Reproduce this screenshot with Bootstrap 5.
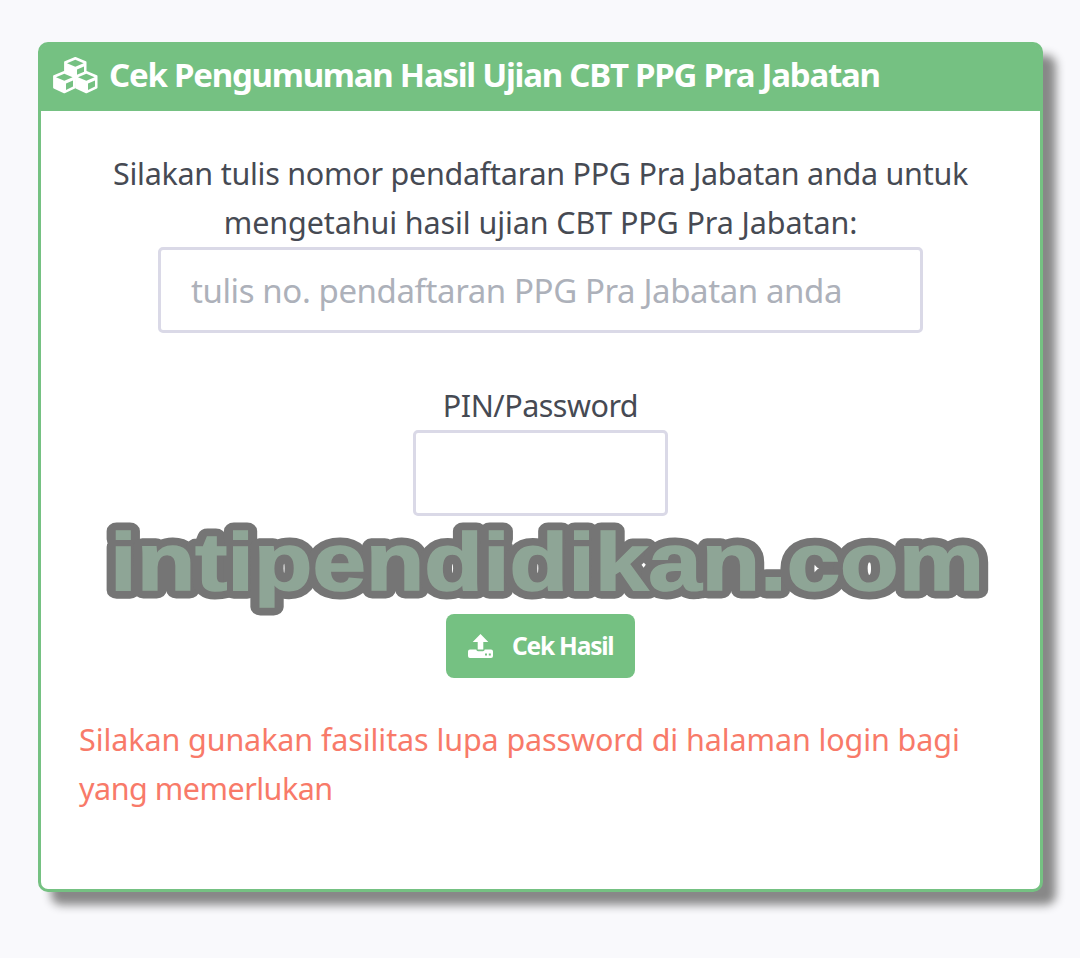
<!DOCTYPE html>
<html lang="id">
<head>
<meta charset="utf-8">
<meta name="viewport" content="width=device-width, initial-scale=1">
<title>Cek Pengumuman</title>
<link href="https://cdn.jsdelivr.net/npm/bootstrap@5.3.0/dist/css/bootstrap.min.css" rel="stylesheet">
<style>
body{background:#f9f9fc;font-family:"Noto Sans","Open Sans",sans-serif;color:#495057;padding:42px 37px 0 38px;height:958px;overflow:hidden}
.panel{height:850px;border:3px solid #75c182;border-radius:10px;box-shadow:13px 13px 10px #888;background:#fff}
.panel-title{height:66px;background:#75c182;border:0;border-radius:7px 7px 0 0;padding:0 0 7px 12px;color:#fff}
.panel-title h1{font-size:33px;font-weight:700;line-height:60px;margin:0 0 0 11px;letter-spacing:-1.24px}
.copy{font-size:30.5px;line-height:49px;color:#464a53;white-space:nowrap;letter-spacing:-.1px}
.intro{margin-top:38px}
.intro span{letter-spacing:-.26px}
.pin-label{margin-top:48px;letter-spacing:-.5px}
.field{height:86px;border:3px solid #dad9e7;border-radius:5px;font-size:33px;padding:0 30px;box-shadow:none;letter-spacing:-.4px}
.field::placeholder{color:#adb1ba;opacity:1}
.number{width:765px}
.pin{width:255px}
.send{width:189px;height:64px;margin-top:98px;background:#75c182;color:#fff;border:0;border-radius:8px;font-size:24.5px;font-weight:700;padding:0 0 0 22px;letter-spacing:-1.2px}
.send:hover{background:#62b671;color:#fff}
.send span{margin-left:19px}
.warn{color:#f87a69;margin:37px 0 0 38px}
.warn span{letter-spacing:-.5px}
.brand{left:100px;top:510px;pointer-events:none;font-family:"Liberation Sans",Arial,sans-serif;font-weight:700;font-size:81px}
</style>
</head>
<body>
<main class="panel card">
  <div class="panel-title card-header d-flex align-items-center">
    <svg width="45" height="38" viewBox="0 0 45 38" aria-hidden="true">
      <defs><g id="cube"><path fill="#fff" stroke="#fff" stroke-width="2" stroke-linejoin="round" d="M22.300 2 32.500 6.200V17.500L22.300 22.300 12.100 17.500V6.200Z"/><path fill="#75c182" d="m22.300 3.700 8.300 3.500-8.300 3.600L14 7.200ZM24 13.500l7-3.100v6.200l-7 3.400z"/></g></defs>
      <use href="#cube"/><use href="#cube" x="-11" y="14"/><use href="#cube" x="11" y="14"/>
    </svg>
    <h1>Cek Pengumuman Hasil Ujian CBT PPG Pra Jabatan</h1>
  </div>
  <div class="card-body p-0 d-flex flex-column align-items-center">
    <label class="copy intro text-center" for="number"><span>Silakan tulis nomor pendaftaran PPG Pra Jabatan anda untuk</span><br>mengetahui hasil ujian CBT PPG Pra Jabatan:</label>
    <input class="form-control field number" id="number" placeholder="tulis no. pendaftaran PPG Pra Jabatan anda">
    <label class="copy pin-label" for="pin">PIN/Password</label>
    <input class="form-control field pin" id="pin" type="password">
    <button class="btn send d-flex align-items-center" type="button">
      <svg width="25" height="24" viewBox="0 0 25 24" aria-hidden="true"><path fill="#fff" d="M12.500 0 20.300 8H15.300V15.500H9.700V8H4.700ZM2 15.500H8.300Q8.500 17.200 10 17.200H15Q16.500 17.200 16.700 15.500H23Q25 15.500 25 17.500V22Q25 24 23 24H2Q0 24 0 22V17.500Q0 15.500 2 15.500Z"/><path fill="#75c182" d="M17 19.500h2v2h-2zM20.800 19.500h2v2h-2z"/></svg>
      <span>Cek Hasil</span>
    </button>
    <p class="copy warn align-self-start">Silakan gunakan fasilitas lupa password di halaman login bagi<br><span>yang memerlukan</span></p>
  </div>
</main>
<svg class="brand position-absolute" width="900" height="115" role="img" aria-label="intipendidikan.com">
  <defs><text id="brand-name" x="10" y="80" textLength="874" lengthAdjust="spacingAndGlyphs">intipendidikan.com</text></defs>
  <use href="#brand-name" fill="none" stroke="#757575" stroke-width="17" stroke-linejoin="round"/>
  <g opacity=".59"><use href="#brand-name" fill="#a1c8ad" stroke="#a1c8ad" stroke-width="1.600"/></g>
</svg>
<script src="https://cdn.jsdelivr.net/npm/bootstrap@5.3.0/dist/js/bootstrap.bundle.min.js"></script>
</body>
</html>
